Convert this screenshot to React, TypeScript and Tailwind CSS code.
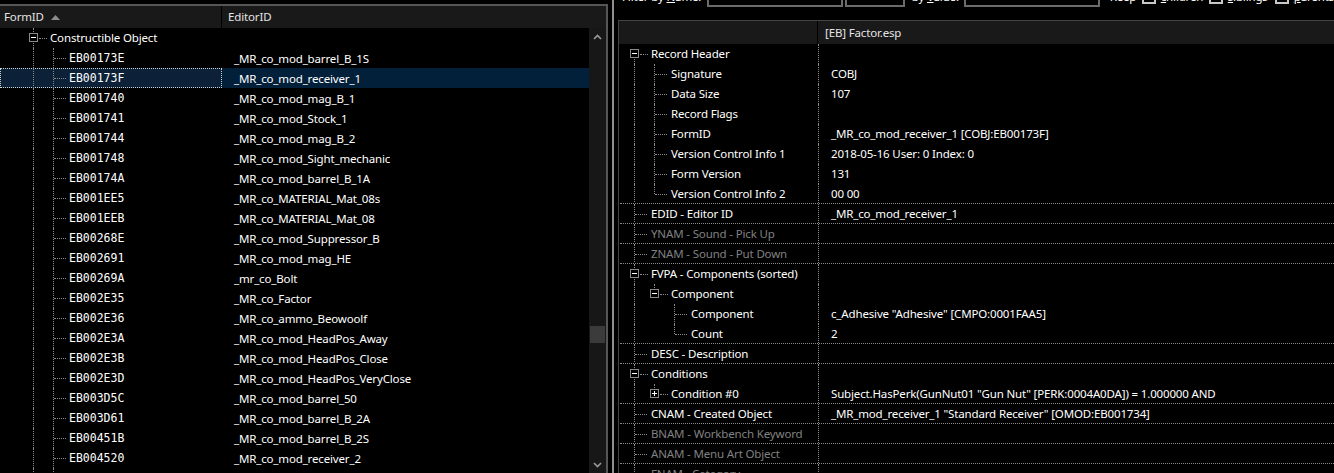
import React from "react";

type Kind = "none" | "line" | "tee" | "elbow";
type Cell = { kind: Kind; box?: "minus" | "plus"; first?: boolean };

const TreeCell = ({ kind, box, first }: Cell) => (
  <div className="relative w-[20px] h-[20px] shrink-0">
    {(kind === "line" || kind === "tee") && (
      <span
        className={`absolute left-[10px] ${first ? "top-[10px]" : "top-0"} bottom-0 border-l border-dotted border-[#8a8a8a]`}
      />
    )}
    {kind === "elbow" && (
      <span className="absolute left-[10px] top-0 h-[10px] border-l border-dotted border-[#8a8a8a]" />
    )}
    {(kind === "tee" || kind === "elbow") && !box && (
      <span className="absolute left-[11px] top-[10px] w-[12px] border-t border-dotted border-[#8a8a8a]" />
    )}
    {box && (
      <>
        <span className="absolute left-[16px] top-[10px] w-[8px] border-t border-dotted border-[#8a8a8a]" />
        <span className="absolute left-[6px] top-[5px] w-[9px] h-[9px] border border-[#8a8a8a] bg-black">
          <span className="absolute left-[1px] top-[3px] w-[5px] h-px bg-white" />
          {box === "plus" && <span className="absolute left-[3px] top-[1px] w-px h-[5px] bg-white" />}
        </span>
      </>
    )}
  </div>
);

const ui = "font-['Noto_Sans','Open_Sans',sans-serif] text-[11.5px] tracking-[-0.15px]";

const forms: [string, string][] = [
  ["EB00173E", "_MR_co_mod_barrel_B_1S"],
  ["EB00173F", "_MR_co_mod_receiver_1"],
  ["EB001740", "_MR_co_mod_mag_B_1"],
  ["EB001741", "_MR_co_mod_Stock_1"],
  ["EB001744", "_MR_co_mod_mag_B_2"],
  ["EB001748", "_MR_co_mod_Sight_mechanic"],
  ["EB00174A", "_MR_co_mod_barrel_B_1A"],
  ["EB001EE5", "_MR_co_MATERIAL_Mat_08s"],
  ["EB001EEB", "_MR_co_MATERIAL_Mat_08"],
  ["EB00268E", "_MR_co_mod_Suppressor_B"],
  ["EB002691", "_MR_co_mod_mag_HE"],
  ["EB00269A", "_mr_co_Bolt"],
  ["EB002E35", "_MR_co_Factor"],
  ["EB002E36", "_MR_co_ammo_Beowoolf"],
  ["EB002E3A", "_MR_co_mod_HeadPos_Away"],
  ["EB002E3B", "_MR_co_mod_HeadPos_Close"],
  ["EB002E3D", "_MR_co_mod_HeadPos_VeryClose"],
  ["EB003D5C", "_MR_co_mod_barrel_50"],
  ["EB003D61", "_MR_co_mod_barrel_B_2A"],
  ["EB00451B", "_MR_co_mod_barrel_B_2S"],
  ["EB004520", "_MR_co_mod_receiver_2"],
  ["", ""],
];

type RRow = { cells: Cell[]; name: string; value?: string; gray?: boolean; sep?: boolean };

const L: Cell = { kind: "line" };
const T: Cell = { kind: "tee" };
const E: Cell = { kind: "elbow" };
const N: Cell = { kind: "none" };

const record: RRow[] = [
  { cells: [{ kind: "line", box: "minus", first: true }], name: "Record Header" },
  { cells: [L, T], name: "Signature", value: "COBJ" },
  { cells: [L, T], name: "Data Size", value: "107" },
  { cells: [L, T], name: "Record Flags" },
  { cells: [L, T], name: "FormID", value: "_MR_co_mod_receiver_1 [COBJ:EB00173F]" },
  { cells: [L, T], name: "Version Control Info 1", value: "2018-05-16 User: 0 Index: 0" },
  { cells: [L, T], name: "Form Version", value: "131" },
  { cells: [L, E], name: "Version Control Info 2", value: "00 00", sep: true },
  { cells: [T], name: "EDID - Editor ID", value: "_MR_co_mod_receiver_1", sep: true },
  { cells: [T], name: "YNAM - Sound - Pick Up", gray: true, sep: true },
  { cells: [T], name: "ZNAM - Sound - Put Down", gray: true, sep: true },
  { cells: [{ kind: "line", box: "minus" }], name: "FVPA - Components (sorted)" },
  { cells: [L, { kind: "elbow", box: "minus" }], name: "Component" },
  { cells: [L, N, T], name: "Component", value: 'c_Adhesive "Adhesive" [CMPO:0001FAA5]' },
  { cells: [L, N, E], name: "Count", value: "2", sep: true },
  { cells: [T], name: "DESC - Description", sep: true },
  { cells: [{ kind: "line", box: "minus" }], name: "Conditions" },
  {
    cells: [L, { kind: "elbow", box: "plus" }],
    name: "Condition #0",
    value: 'Subject.HasPerk(GunNut01 "Gun Nut" [PERK:0004A0DA]) = 1.000000 AND',
    sep: true,
  },
  {
    cells: [T],
    name: "CNAM - Created Object",
    value: '_MR_mod_receiver_1 "Standard Receiver" [OMOD:EB001734]',
    sep: true,
  },
  { cells: [T], name: "BNAM - Workbench Keyword", gray: true, sep: true },
  { cells: [T], name: "ANAM - Menu Art Object", gray: true, sep: true },
  { cells: [T], name: "FNAM - Category", gray: true },
];

const Chevron = ({ down }: { down?: boolean }) => (
  <svg width="9" height="6" viewBox="0 0 9 6" className={down ? "rotate-180" : ""}>
    <path d="M1 5 L4.5 1.5 L8 5" fill="none" stroke="#9a9a9a" strokeWidth="1.6" />
  </svg>
);

const FormList = () => (
  <div className="w-[608px] shrink-0 pt-[4px] flex flex-col">
    <div className="flex-1 flex flex-col border-t-2 border-r-2 border-[#565656] min-h-0">
      <div className="h-[22px] bg-[#191919] flex items-center text-[#e4e4e4]">
        <div className="w-[222px] flex items-center pl-[4px] border-r border-black h-full">
          <span>FormID</span>
          <svg width="9" height="5" viewBox="0 0 9 5" className="ml-[7px]">
            <path d="M0 5 L4.5 0 L9 5 Z" fill="#8c8c8c" />
          </svg>
        </div>
        <div className="pl-[6px]">EditorID</div>
      </div>
      <div className="flex-1 flex min-h-0 overflow-hidden">
        <div className="flex-1 flex flex-col">
          <div className="h-[20px] flex items-center text-white">
            <div className="w-[23px]" />
            <TreeCell kind="line" box="minus" />
            <span className="pl-[7px]">Constructible Object</span>
          </div>
          {forms.map(([id, eid], i) => {
            const sel = i === 1;
            return (
              <div key={i} className="h-[20px] shrink-0 flex text-white">
                <div
                  className={`w-[222px] flex items-center ${
                    sel ? "bg-[#0c2137] outline outline-1 outline-dotted outline-offset-[-1px] outline-[#d0d0d0]" : ""
                  }`}
                >
                  <div className="w-[23px]" />
                  <TreeCell kind="line" />
                  <TreeCell kind="tee" />
                  <span className="pl-[6px] pt-px font-['DejaVu_Sans_Mono',monospace] text-[11.5px] tracking-normal">
                    {id}
                  </span>
                </div>
                <div className={`flex-1 flex items-center pl-[12px] pt-px ${sel ? "bg-[#03203a]" : ""}`}>{eid}</div>
              </div>
            );
          })}
        </div>
        <div className="w-[17px] bg-[#171717] flex flex-col items-center justify-between">
          <div className="h-[17px] flex items-center justify-center">
            <Chevron />
          </div>
          <div className="flex-1 w-full">
            <div className="mt-[281px] mx-[1px] h-[17px] bg-[#3b3b3b]" />
          </div>
          <div className="h-[17px] flex items-center justify-center">
            <Chevron down />
          </div>
        </div>
      </div>
    </div>
  </div>
);

const Box = ({ w }: { w: string }) => <div className={`${w} h-[21px] border-2 border-[#6b6b6b] shrink-0`} />;
const Check = () => <div className="w-[14px] h-[14px] border-2 border-[#c8c8c8] shrink-0 mb-[3px]" />;

const FilterBar = () => (
  <div className="h-[20px] overflow-hidden">
    <div className="h-[27px] -mt-[20px] flex items-end text-white">
      <div className="w-[89px] pl-[4px] mb-[3px] leading-[15px] shrink-0">
        Filter by <span className="underline">N</span>ame:
      </div>
      <Box w="w-[136px]" />
      <div className="w-[7px]" />
      <Box w="w-[60px]" />
      <div className="w-[59px] pl-[7px] mb-[3px] leading-[15px] shrink-0">
        by <span className="underline">V</span>alue:
      </div>
      <Box w="w-[136px]" />
      <div className="w-[42px] pl-[10px] mb-[3px] leading-[15px] shrink-0">Keep</div>
      <Check />
      <div className="w-[53px] pl-[5px] mb-[3px] leading-[15px] shrink-0">
        <span className="underline">c</span>hildren
      </div>
      <Check />
      <div className="w-[52px] pl-[5px] mb-[3px] leading-[15px] shrink-0">
        <span className="underline">s</span>iblings
      </div>
      <Check />
      <div className="pl-[5px] mb-[3px] leading-[15px] whitespace-nowrap">
        <span className="underline">p</span>arents
      </div>
    </div>
  </div>
);

const RecordView = () => (
  <div className="flex-1 flex flex-col min-w-0">
    <FilterBar />
    <div className="flex-1 border-t border-l border-[#444] flex flex-col min-h-0 overflow-hidden">
      <div className="h-[23px] shrink-0 bg-[#191919] flex text-[#e4e4e4]">
        <div className="w-[199px] border-r border-black" />
        <div className="pl-[7px] flex items-center">[EB] Factor.esp</div>
      </div>
      {record.map((r, i) => (
        <div
          key={i}
          className={`h-[20px] shrink-0 flex ml-[1px] ${r.sep ? "border-b border-dotted border-[#8a8a8a]" : ""}`}
        >
          <div className="w-[198px] flex items-start overflow-hidden">
            <div className="w-[4px] shrink-0" />
            {r.cells.map((c, j) => (
              <TreeCell key={j} {...c} />
            ))}
            <span
              className={`pl-[7px] leading-[20px] whitespace-nowrap ${r.gray ? "text-[#808080]" : "text-white"}`}
            >
              {r.name}
            </span>
          </div>
          <div className="flex-1 border-l border-dotted border-[#8a8a8a] pl-[12px] leading-[20px] text-white whitespace-nowrap">
            {r.value}
          </div>
        </div>
      ))}
    </div>
  </div>
);

export default function App() {
  return (
    <div className={`w-[1334px] h-[473px] bg-black flex overflow-hidden ${ui}`}>
      <FormList />
      <div className="w-[4px] shrink-0" />
      <div className="w-[2px] shrink-0 bg-[#8f8f8f]" />
      <div className="w-[4px] shrink-0" />
      <RecordView />
    </div>
  );
}
